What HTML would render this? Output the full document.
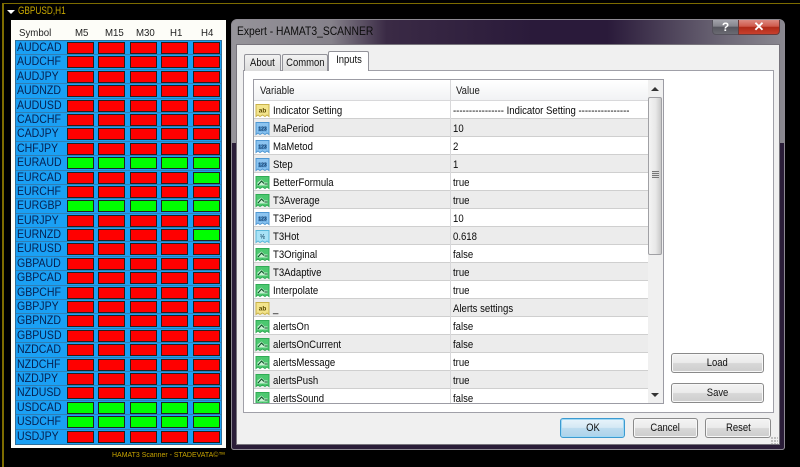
<!DOCTYPE html>
<html><head><meta charset="utf-8"><style>
html,body{margin:0;padding:0;background:#000}
#p{position:relative;width:800px;height:467px;overflow:hidden;background:#000;font-family:"Liberation Sans",sans-serif;filter:blur(.35px)}
#p div,#p span{position:absolute;box-sizing:border-box}
#p span.in{position:relative;display:inline-block;transform:scaleX(.86);white-space:nowrap}
.frame{left:2px;top:3px;width:800px;height:470px;border:1px solid #7d6c00;border-left-width:2px}
.ttl{left:18px;top:5px;font-size:11px;line-height:13px;color:#c8a800;white-space:nowrap;transform:scaleX(.75);transform-origin:0 0}
.tri{left:7px;top:10px;width:0;height:0;border-left:4px solid transparent;border-right:4px solid transparent;border-top:4px solid #fff}
.pan{left:11px;top:20px;width:215px;height:428px;background:#fdfdf8}
.hd{top:27px;font-size:10.5px;line-height:13px;color:#222;white-space:nowrap;transform:scaleX(.92);transform-origin:0 0}
.tb{left:15px;top:40px;width:207px;height:405px;background:#1aa0f4;border:1px solid #2f6f9a}
#p .r{position:relative;display:block;left:0;width:205px;height:14.4px;border-bottom:1px solid #2f7fb5}
#p .r span.s{left:1px;top:0;font-size:12px;line-height:13px;color:#062050;transform:scaleX(.88);transform-origin:0 0}
#p .r span.c{top:1px;width:27px;height:12px;background:#f00;border:1px solid #222}
#p .r span.g{background:#0f0}
.r .a{left:51px}.r .b{left:82px}.r .d{left:113.5px}.r .e{left:145px}.r .f{left:176.5px}
.foot{left:112px;top:450px;font-size:7.5px;line-height:10px;color:#c8a400;white-space:nowrap;transform:scaleX(.93);transform-origin:0 0}
.dlg{left:231px;top:19px;width:554px;height:431px;border-radius:6px 6px 3px 3px;border:1px solid #8d8a92;background:linear-gradient(90deg,#96949a 0,#85818a 18%,#3a2a45 28%,#2a1a3a 55%,#2a1a3a 68%,#6f6a78 90%,#8a8890 100%)}
.dlow{left:231px;top:143px;width:554px;height:307px;border:1px solid #8d8a92;border-top:0;border-radius:0 0 3px 3px;background:#2a1d38}
.dt{left:237px;top:24px;font-size:12px;line-height:15px;color:#0c0c0c;white-space:nowrap;transform:scaleX(.86);transform-origin:0 0}
.cl{left:236px;top:44px;width:544px;height:401px;background:#f0f0f0;border:1px solid #77747c}
.help{left:712px;top:20px;width:27px;height:15px;background:linear-gradient(#a2a2aa,#85858d 45%,#55555e 50%,#6a6a72);border:1px solid #55525c;border-top:0;border-radius:0 0 0 4px;color:#fff;font:bold 12px/14px "Liberation Sans",sans-serif;text-align:center}
.close{left:738px;top:20px;width:42px;height:15px;background:linear-gradient(#dc8a80,#cf5a4c 45%,#b02a18 52%,#c8402c);border:1px solid #6a3b3b;border-top:0;border-radius:0 0 4px 0;color:#fff;font:bold 13px/14px "Liberation Sans",sans-serif;text-align:center}
.tab{font-size:11px;line-height:14px;color:#111;text-align:center;border:1px solid #929299;border-bottom:0;background:linear-gradient(#f2f2f2,#dcdcdc);padding-top:1px;border-radius:2px 2px 0 0}
.tpan{left:243px;top:70px;width:531px;height:343px;background:#fff;border:1px solid #a0a0a8}
.tab.on{background:#fff;padding-top:1px;height:20px;z-index:2}
.lst{left:253px;top:79px;width:411px;height:325px;background:#fff;border:1px solid #9c9ca4;overflow:hidden}
.lh{left:0;top:0;width:394px;height:21px;background:linear-gradient(#fff,#f1f2f4);border-bottom:1px solid #d8d8da;font-size:11px;line-height:23px;color:#1a1a1a}
.lh span{transform:scaleX(.87);transform-origin:0 0}
#p .row{left:0;width:394px;height:18px;font-size:11px;line-height:20px;color:#0a0a0a;border-bottom:1px solid #cfcfcf;background:#fff;white-space:nowrap}
#p .row.z{background:#ececec}
#p .row svg{position:absolute;left:1px;top:2px;width:15px;height:15px}
#p .row span.n{left:19px;top:0;transform:scaleX(.87);transform-origin:0 0}
#p .row span.v{left:198.500px;top:0;transform:scaleX(.87);transform-origin:0 0}
.sep{left:196px;top:0;width:1px;height:325px;background:#d8d8da}
.sbar{left:394px;top:0;width:16px;height:323px;background:#f0f0f0}
.thumb{left:0;top:17px;width:14px;height:158px;border:1px solid #a0a0a4;border-radius:2px;background:linear-gradient(90deg,#f3f3f3,#e8e8e8 55%,#c8c8c8)}
.grip{left:3px;top:73px;width:7px;height:7px;background:repeating-linear-gradient(#777 0,#777 1px,#ddd 1px,#ddd 2px)}
.up{left:3px;top:7px;width:0;height:0;border-left:4px solid transparent;border-right:4px solid transparent;border-bottom:4px solid #333}
.dn{left:3px;top:313px;width:0;height:0;border-left:4px solid transparent;border-right:4px solid transparent;border-top:4px solid #333}
.btn{font-size:11px;line-height:18px;color:#111;text-align:center;border:1px solid #8a8a8a;border-radius:3px;background:linear-gradient(#f4f4f4,#ebebeb 48%,#d8d8d8 52%,#cdcdcd);box-shadow:inset 0 0 0 1px #f8f8f8}
.btn.def{border-color:#3c9ad0;background:linear-gradient(#e8f4fb,#d4e8f4 48%,#bcdcef 52%,#add2ea);box-shadow:inset 0 0 0 1px #9fd8f4}
.sz{left:771px;top:437px;width:7px;height:7px;background:radial-gradient(circle at 1px 1px,#bbb 1px,transparent 1.2px) 0 0/3px 3px}
svg text{font-family:"Liberation Sans",sans-serif;font-weight:bold;text-anchor:middle}
</style></head><body>
<svg width="0" height="0" style="position:absolute"><defs>
<symbol id="ab" viewBox="0 0 15 15"><path d="M1 1.500h13v12l-2-1.500-2 1.500-2.500-1.500-2.500 1.500-2-1.500-2 1.500z" fill="#f3e48c" stroke="#c9b24a"/></symbol>
<symbol id="n1" viewBox="0 0 15 15"><path d="M1 1.500h13v12l-2-1.500-2 1.500-2.500-1.500-2.500 1.500-2-1.500-2 1.500z" fill="#8cc4f0" stroke="#4f97d2"/><path d="M3 5.500h9v5H3z" fill="#5fa5dc"/></symbol>
<symbol id="n2" viewBox="0 0 15 15"><path d="M1 1.500h13v12l-2-1.500-2 1.500-2.500-1.500-2.500 1.500-2-1.500-2 1.500z" fill="#a8e2f6" stroke="#5ab8da"/></symbol>
<symbol id="bo" viewBox="0 0 15 15"><path d="M1 1.500h13v12l-2-1.500-2 1.500-2.500-1.500-2.500 1.500-2-1.500-2 1.500z" fill="#4cc870" stroke="#30ab55"/><path d="M2.500 7.500l4-3 3 3h3v3h-10z" fill="#c8f2d2"/><path d="M3 10l3.500-4 2.500 2.500M9.500 9h3" fill="none" stroke="#0a4f26" stroke-width="1.100"/></symbol>
</defs></svg>
<div id="p">
<div class="frame"></div>
<div class="tri"></div>
<div class="ttl">GBPUSD,H1</div>
<div class="pan"></div>
<div class="hd" style="left:19px">Symbol</div>
<div class="hd" style="left:75px">M5</div>
<div class="hd" style="left:105px">M15</div>
<div class="hd" style="left:136px">M30</div>
<div class="hd" style="left:170px">H1</div>
<div class="hd" style="left:201px">H4</div>
<div class="tb">
<div class="r"><span class="s">AUDCAD</span><span class="c a"></span><span class="c b"></span><span class="c d"></span><span class="c e"></span><span class="c f"></span></div>
<div class="r"><span class="s">AUDCHF</span><span class="c a"></span><span class="c b"></span><span class="c d"></span><span class="c e"></span><span class="c f"></span></div>
<div class="r"><span class="s">AUDJPY</span><span class="c a"></span><span class="c b"></span><span class="c d"></span><span class="c e"></span><span class="c f"></span></div>
<div class="r"><span class="s">AUDNZD</span><span class="c a"></span><span class="c b"></span><span class="c d"></span><span class="c e"></span><span class="c f"></span></div>
<div class="r"><span class="s">AUDUSD</span><span class="c a"></span><span class="c b"></span><span class="c d"></span><span class="c e"></span><span class="c f"></span></div>
<div class="r"><span class="s">CADCHF</span><span class="c a"></span><span class="c b"></span><span class="c d"></span><span class="c e"></span><span class="c f"></span></div>
<div class="r"><span class="s">CADJPY</span><span class="c a"></span><span class="c b"></span><span class="c d"></span><span class="c e"></span><span class="c f"></span></div>
<div class="r"><span class="s">CHFJPY</span><span class="c a"></span><span class="c b"></span><span class="c d"></span><span class="c e"></span><span class="c f"></span></div>
<div class="r"><span class="s">EURAUD</span><span class="c g a"></span><span class="c g b"></span><span class="c g d"></span><span class="c g e"></span><span class="c g f"></span></div>
<div class="r"><span class="s">EURCAD</span><span class="c a"></span><span class="c b"></span><span class="c d"></span><span class="c e"></span><span class="c g f"></span></div>
<div class="r"><span class="s">EURCHF</span><span class="c a"></span><span class="c b"></span><span class="c d"></span><span class="c e"></span><span class="c f"></span></div>
<div class="r"><span class="s">EURGBP</span><span class="c g a"></span><span class="c g b"></span><span class="c g d"></span><span class="c g e"></span><span class="c g f"></span></div>
<div class="r"><span class="s">EURJPY</span><span class="c a"></span><span class="c b"></span><span class="c d"></span><span class="c e"></span><span class="c f"></span></div>
<div class="r"><span class="s">EURNZD</span><span class="c a"></span><span class="c b"></span><span class="c d"></span><span class="c e"></span><span class="c g f"></span></div>
<div class="r"><span class="s">EURUSD</span><span class="c a"></span><span class="c b"></span><span class="c d"></span><span class="c e"></span><span class="c f"></span></div>
<div class="r"><span class="s">GBPAUD</span><span class="c a"></span><span class="c b"></span><span class="c d"></span><span class="c e"></span><span class="c f"></span></div>
<div class="r"><span class="s">GBPCAD</span><span class="c a"></span><span class="c b"></span><span class="c d"></span><span class="c e"></span><span class="c f"></span></div>
<div class="r"><span class="s">GBPCHF</span><span class="c a"></span><span class="c b"></span><span class="c d"></span><span class="c e"></span><span class="c f"></span></div>
<div class="r"><span class="s">GBPJPY</span><span class="c a"></span><span class="c b"></span><span class="c d"></span><span class="c e"></span><span class="c f"></span></div>
<div class="r"><span class="s">GBPNZD</span><span class="c a"></span><span class="c b"></span><span class="c d"></span><span class="c e"></span><span class="c f"></span></div>
<div class="r"><span class="s">GBPUSD</span><span class="c a"></span><span class="c b"></span><span class="c d"></span><span class="c e"></span><span class="c f"></span></div>
<div class="r"><span class="s">NZDCAD</span><span class="c a"></span><span class="c b"></span><span class="c d"></span><span class="c e"></span><span class="c f"></span></div>
<div class="r"><span class="s">NZDCHF</span><span class="c a"></span><span class="c b"></span><span class="c d"></span><span class="c e"></span><span class="c f"></span></div>
<div class="r"><span class="s">NZDJPY</span><span class="c a"></span><span class="c b"></span><span class="c d"></span><span class="c e"></span><span class="c f"></span></div>
<div class="r"><span class="s">NZDUSD</span><span class="c a"></span><span class="c b"></span><span class="c d"></span><span class="c e"></span><span class="c f"></span></div>
<div class="r"><span class="s">USDCAD</span><span class="c g a"></span><span class="c g b"></span><span class="c g d"></span><span class="c g e"></span><span class="c g f"></span></div>
<div class="r"><span class="s">USDCHF</span><span class="c g a"></span><span class="c g b"></span><span class="c g d"></span><span class="c g e"></span><span class="c g f"></span></div>
<div class="r" style="border:0"><span class="s">USDJPY</span><span class="c a"></span><span class="c b"></span><span class="c d"></span><span class="c e"></span><span class="c f"></span></div>
</div>
<div class="foot">HAMAT3 Scanner - STADEVATA©™</div>

<div class="dlg"></div>
<div class="dlow"></div>
<div class="dt">Expert - HAMAT3_SCANNER</div>
<div class="help">?</div>
<div class="close">✕</div>
<div class="cl"></div>
<div class="tpan"></div>
<div class="tab" style="left:244px;top:54px;width:37px;height:17px"><span class="in">About</span></div>
<div class="tab" style="left:282px;top:54px;width:46px;height:17px"><span class="in">Common</span></div>
<div class="tab on" style="left:328px;top:51px;width:41px"><span class="in">Inputs</span></div>
<div class="lst">
<div class="lh"><span style="left:6px;top:0">Variable</span><span style="left:202px;top:0">Value</span></div>
<div class="row" style="top:21px"><svg viewBox="0 0 15 15"><use href="#ab"/><text x="7.500" y="9.500" font-size="6.500" fill="#5c4a00">ab</text></svg><span class="n">Indicator Setting</span><span class="v">---------------- Indicator Setting ----------------</span></div>
<div class="row z" style="top:39px"><svg viewBox="0 0 15 15"><use href="#n1"/><text x="7.500" y="9.500" font-size="5" fill="#0e2c58">123</text></svg><span class="n">MaPeriod</span><span class="v">10</span></div>
<div class="row" style="top:57px"><svg viewBox="0 0 15 15"><use href="#n1"/><text x="7.500" y="9.500" font-size="5" fill="#0e2c58">123</text></svg><span class="n">MaMetod</span><span class="v">2</span></div>
<div class="row z" style="top:75px"><svg viewBox="0 0 15 15"><use href="#n1"/><text x="7.500" y="9.500" font-size="5" fill="#0e2c58">123</text></svg><span class="n">Step</span><span class="v">1</span></div>
<div class="row" style="top:93px"><svg viewBox="0 0 15 15"><use href="#bo"/></svg><span class="n">BetterFormula</span><span class="v">true</span></div>
<div class="row z" style="top:111px"><svg viewBox="0 0 15 15"><use href="#bo"/></svg><span class="n">T3Average</span><span class="v">true</span></div>
<div class="row" style="top:129px"><svg viewBox="0 0 15 15"><use href="#n1"/><text x="7.500" y="9.500" font-size="5" fill="#0e2c58">123</text></svg><span class="n">T3Period</span><span class="v">10</span></div>
<div class="row z" style="top:147px"><svg viewBox="0 0 15 15"><use href="#n2"/><text x="7.500" y="9.500" font-size="6" fill="#0e3c58">½</text></svg><span class="n">T3Hot</span><span class="v">0.618</span></div>
<div class="row" style="top:165px"><svg viewBox="0 0 15 15"><use href="#bo"/></svg><span class="n">T3Original</span><span class="v">false</span></div>
<div class="row z" style="top:183px"><svg viewBox="0 0 15 15"><use href="#bo"/></svg><span class="n">T3Adaptive</span><span class="v">true</span></div>
<div class="row" style="top:201px"><svg viewBox="0 0 15 15"><use href="#bo"/></svg><span class="n">Interpolate</span><span class="v">true</span></div>
<div class="row z" style="top:219px"><svg viewBox="0 0 15 15"><use href="#ab"/><text x="7.500" y="9.500" font-size="6.500" fill="#5c4a00">ab</text></svg><span class="n">_</span><span class="v">Alerts settings</span></div>
<div class="row" style="top:237px"><svg viewBox="0 0 15 15"><use href="#bo"/></svg><span class="n">alertsOn</span><span class="v">false</span></div>
<div class="row z" style="top:255px"><svg viewBox="0 0 15 15"><use href="#bo"/></svg><span class="n">alertsOnCurrent</span><span class="v">false</span></div>
<div class="row" style="top:273px"><svg viewBox="0 0 15 15"><use href="#bo"/></svg><span class="n">alertsMessage</span><span class="v">true</span></div>
<div class="row z" style="top:291px"><svg viewBox="0 0 15 15"><use href="#bo"/></svg><span class="n">alertsPush</span><span class="v">true</span></div>
<div class="row" style="top:309px;border:0"><svg viewBox="0 0 15 15"><use href="#bo"/></svg><span class="n">alertsSound</span><span class="v">false</span></div>
<div class="sep"></div>
<div class="sbar"><div class="up"></div><div class="thumb"><div class="grip"></div></div><div class="dn"></div></div>
</div>
<div class="btn" style="left:671px;top:353px;width:93px;height:20px"><span class="in">Load</span></div>
<div class="btn" style="left:671px;top:383px;width:93px;height:20px"><span class="in">Save</span></div>
<div class="btn def" style="left:560px;top:418px;width:65px;height:20px"><span class="in">OK</span></div>
<div class="btn" style="left:633px;top:418px;width:65px;height:20px"><span class="in">Cancel</span></div>
<div class="btn" style="left:705px;top:418px;width:66px;height:20px"><span class="in">Reset</span></div>
<div class="sz"></div>
</div>
</body></html>
